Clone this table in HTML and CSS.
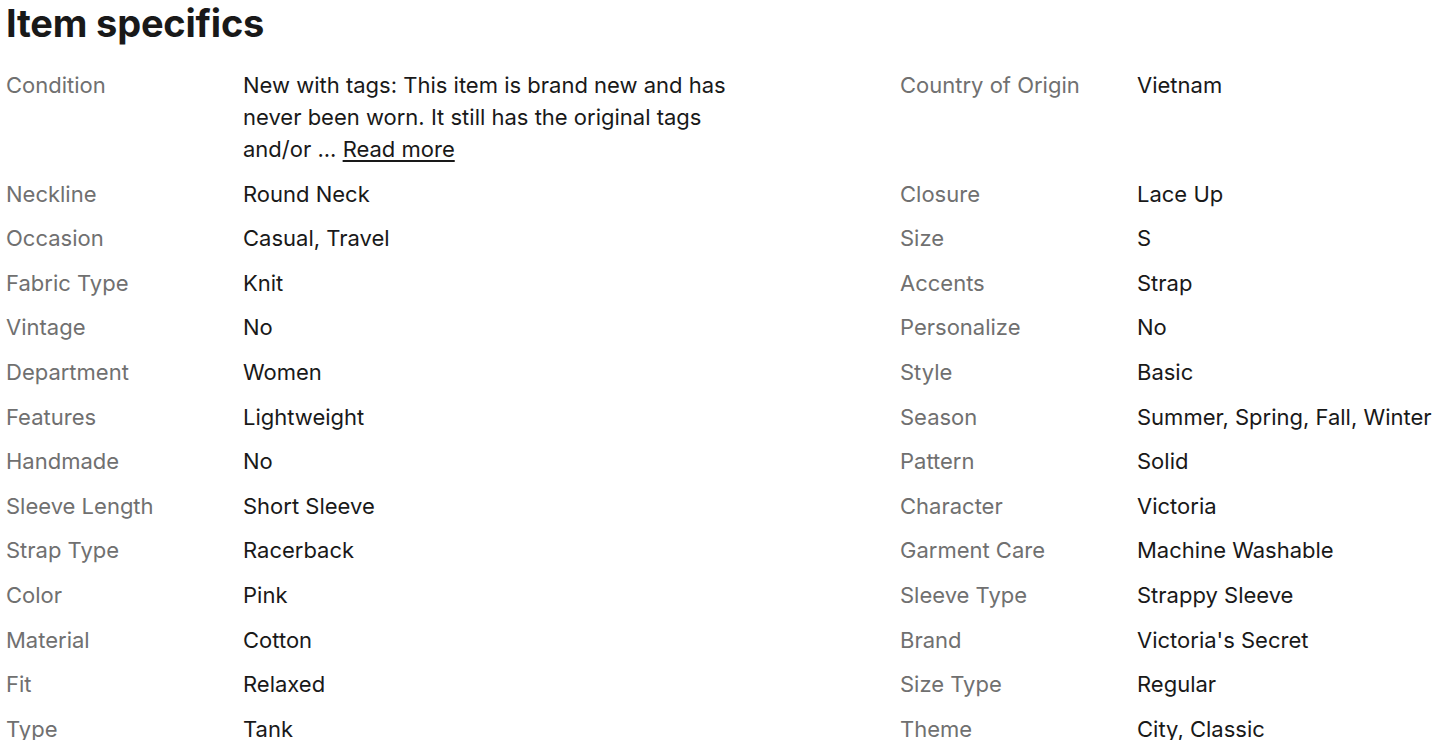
FILE: index.html
```html
<!DOCTYPE html>
<html lang="en">
<head>
    <meta charset="UTF-8">
    <meta name="viewport" content="width=device-width, initial-scale=1.0">
    <title>Item specifics</title>
    <link rel="stylesheet" href="styles.css">
</head>
<body>

    <div class="specifics">
        <h2 class="title">Item specifics</h2>

        <div class="row">
            <div class="pair">
                <div class="label">Condition</div>
                <div class="value value-long">New with tags: This item is brand new and has never been worn. It still has the original tags and/or ... <a href="#" class="more">Read more</a></div>
            </div>
            <div class="pair">
                <div class="label">Country of Origin</div>
                <div class="value">Vietnam</div>
            </div>
        </div>
        <div class="row">
            <div class="pair"><div class="label">Neckline</div><div class="value">Round Neck</div></div>
            <div class="pair"><div class="label">Closure</div><div class="value">Lace Up</div></div>
        </div>
        <div class="row">
            <div class="pair"><div class="label">Occasion</div><div class="value">Casual, Travel</div></div>
            <div class="pair"><div class="label">Size</div><div class="value">S</div></div>
        </div>
        <div class="row">
            <div class="pair"><div class="label">Fabric Type</div><div class="value">Knit</div></div>
            <div class="pair"><div class="label">Accents</div><div class="value">Strap</div></div>
        </div>
        <div class="row">
            <div class="pair"><div class="label">Vintage</div><div class="value">No</div></div>
            <div class="pair"><div class="label">Personalize</div><div class="value">No</div></div>
        </div>
        <div class="row">
            <div class="pair"><div class="label">Department</div><div class="value">Women</div></div>
            <div class="pair"><div class="label">Style</div><div class="value">Basic</div></div>
        </div>
        <div class="row">
            <div class="pair"><div class="label">Features</div><div class="value">Lightweight</div></div>
            <div class="pair"><div class="label">Season</div><div class="value">Summer, Spring, Fall, Winter</div></div>
        </div>
        <div class="row">
            <div class="pair"><div class="label">Handmade</div><div class="value">No</div></div>
            <div class="pair"><div class="label">Pattern</div><div class="value">Solid</div></div>
        </div>
        <div class="row">
            <div class="pair"><div class="label">Sleeve Length</div><div class="value">Short Sleeve</div></div>
            <div class="pair"><div class="label">Character</div><div class="value">Victoria</div></div>
        </div>
        <div class="row">
            <div class="pair"><div class="label">Strap Type</div><div class="value">Racerback</div></div>
            <div class="pair"><div class="label">Garment Care</div><div class="value">Machine Washable</div></div>
        </div>
        <div class="row">
            <div class="pair"><div class="label">Color</div><div class="value">Pink</div></div>
            <div class="pair"><div class="label">Sleeve Type</div><div class="value">Strappy Sleeve</div></div>
        </div>
        <div class="row">
            <div class="pair"><div class="label">Material</div><div class="value">Cotton</div></div>
            <div class="pair"><div class="label">Brand</div><div class="value">Victoria's Secret</div></div>
        </div>
        <div class="row">
            <div class="pair"><div class="label">Fit</div><div class="value">Relaxed</div></div>
            <div class="pair"><div class="label">Size Type</div><div class="value">Regular</div></div>
        </div>
        <div class="row">
            <div class="pair"><div class="label">Type</div><div class="value">Tank</div></div>
            <div class="pair"><div class="label">Theme</div><div class="value">City, Classic</div></div>
        </div>
    </div>

</body>
</html>
```

FILE: styles.css
```css
body {
    margin: 0;
    background-color: #ffffff;
    font-family: Inter, "Noto Sans", Arial, sans-serif;
    color: #191919;
    overflow: hidden;
}
.specifics {
    padding: 0 6px;
}
.title {
    margin: 0 0 23px;
    font-size: 38px;
    line-height: 46px;
    font-weight: 700;
    letter-spacing: -0.2px;
    color: #191919;
}
.row {
    display: grid;
    grid-template-columns: 894px 1fr;
    margin-bottom: 12.6px;
}
.pair {
    display: flex;
    min-width: 0;
    font-size: 22px;
    line-height: 32px;
}
.label {
    width: 237px;
    flex-shrink: 0;
    color: #707070;
}
.value {
    color: #191919;
    white-space: nowrap;
}
.value-long {
    max-width: 500px;
    white-space: normal;
}
.more {
    color: #191919;
    text-decoration: underline;
    text-underline-offset: 3px;
}
```
